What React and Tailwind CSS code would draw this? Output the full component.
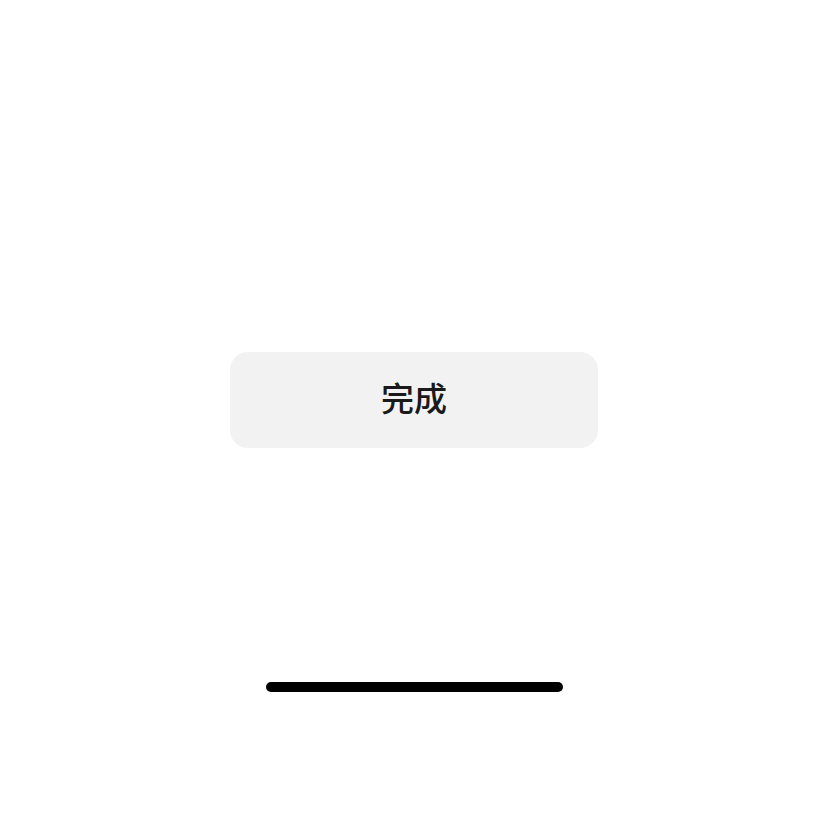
export default function App() {
  return (
    <div className="w-full h-[828px] bg-white flex flex-col items-center pt-[352px] font-['Noto_Sans_CJK_SC','Noto_Sans',sans-serif]">
      <button className="w-[368px] h-[96px] rounded-[18px] bg-[#f2f2f2] flex items-center justify-center pb-[5px] text-[33px] font-medium text-[#1a1a1a] leading-none">
        完成
      </button>
      <div className="mt-[234px] w-[297px] h-[10px] rounded-full bg-black" />
    </div>
  )
}
